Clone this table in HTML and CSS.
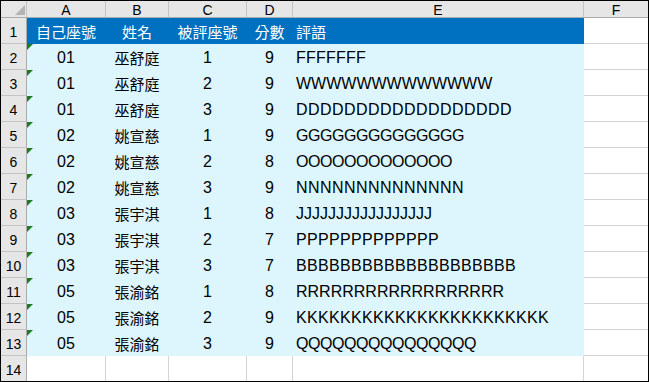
FILE: index.html
```html
<!DOCTYPE html>
<html>
<head>
<meta charset="utf-8">
<link rel="stylesheet" href="styles.css">
</head>
<body>
<div class="sheet">
  <div class="hc corner"><span class="tri"></span></div>
  <div class="hc col">A</div><div class="hc col">B</div><div class="hc col">C</div><div class="hc col">D</div><div class="hc col">E</div><div class="hc col last">F</div>

  <div class="rh">1</div>
  <div class="c head">自己座號</div><div class="c head">姓名</div><div class="c head">被評座號</div><div class="c head">分數</div><div class="c head left">評語</div><div class="c empty last"></div>

  <div class="rh">2</div>
  <div class="c d tx">01</div><div class="c d cjk">巫舒庭</div><div class="c d">1</div><div class="c d">9</div><div class="c d left ls-f">FFFFFFF</div><div class="c empty last"></div>

  <div class="rh">3</div>
  <div class="c d tx">01</div><div class="c d cjk">巫舒庭</div><div class="c d">2</div><div class="c d">9</div><div class="c d left">WWWWWWWWWWWWW</div><div class="c empty last"></div>

  <div class="rh">4</div>
  <div class="c d tx">01</div><div class="c d cjk">巫舒庭</div><div class="c d">3</div><div class="c d">9</div><div class="c d left ls-up">DDDDDDDDDDDDDDDDDD</div><div class="c empty last"></div>

  <div class="rh">5</div>
  <div class="c d tx">02</div><div class="c d cjk">姚宣慈</div><div class="c d">1</div><div class="c d">9</div><div class="c d left ls-down">GGGGGGGGGGGGGG</div><div class="c empty last"></div>

  <div class="rh">6</div>
  <div class="c d tx">02</div><div class="c d cjk">姚宣慈</div><div class="c d">2</div><div class="c d">8</div><div class="c d left ls-down">OOOOOOOOOOOOO</div><div class="c empty last"></div>

  <div class="rh">7</div>
  <div class="c d tx">02</div><div class="c d cjk">姚宣慈</div><div class="c d">3</div><div class="c d">9</div><div class="c d left ls-up">NNNNNNNNNNNNNN</div><div class="c empty last"></div>

  <div class="rh">8</div>
  <div class="c d tx">03</div><div class="c d cjk">張宇淇</div><div class="c d">1</div><div class="c d">8</div><div class="c d left">JJJJJJJJJJJJJJJJJ</div><div class="c empty last"></div>

  <div class="rh">9</div>
  <div class="c d tx">03</div><div class="c d cjk">張宇淇</div><div class="c d">2</div><div class="c d">7</div><div class="c d left ls-k">PPPPPPPPPPPPP</div><div class="c empty last"></div>

  <div class="rh">10</div>
  <div class="c d tx">03</div><div class="c d cjk">張宇淇</div><div class="c d">3</div><div class="c d">7</div><div class="c d left ls-k">BBBBBBBBBBBBBBBBBBBB</div><div class="c empty last"></div>

  <div class="rh">11</div>
  <div class="c d tx">05</div><div class="c d cjk">張渝銘</div><div class="c d">1</div><div class="c d">8</div><div class="c d left">RRRRRRRRRRRRRRRRRR</div><div class="c empty last"></div>

  <div class="rh">12</div>
  <div class="c d tx">05</div><div class="c d cjk">張渝銘</div><div class="c d">2</div><div class="c d">9</div><div class="c d left ls-k">KKKKKKKKKKKKKKKKKKKKKKK</div><div class="c empty last"></div>

  <div class="rh">13</div>
  <div class="c d tx">05</div><div class="c d cjk">張渝銘</div><div class="c d">3</div><div class="c d">9</div><div class="c d left ls-down">QQQQQQQQQQQQQQQ</div><div class="c empty last"></div>

  <div class="rh bottom">14</div>
  <div class="c empty bottom"></div><div class="c empty bottom"></div><div class="c empty bottom"></div><div class="c empty bottom"></div><div class="c empty bottom"></div><div class="c empty bottom last"></div>
</div>
</body>
</html>
```

FILE: styles.css
```css
html, body {
  margin: 0;
  padding: 0;
  background: #ffffff;
}

.sheet {
  width: 649px;
  height: 382px;
  box-sizing: border-box;
  border: 1px solid #000000;
  display: grid;
  grid-template-columns: 26px 79px 63px 78px 46px 291px 64px;
  grid-template-rows: 17px repeat(13, 26px) 25px;
  font-family: "Liberation Sans", "Noto Sans CJK TC", sans-serif;
  color: #000000;
}

.sheet > div {
  box-sizing: border-box;
  border-right: 1px solid #d4d4d4;
  border-bottom: 1px solid #d4d4d4;
  display: flex;
  align-items: center;
  justify-content: center;
  line-height: 1;
  white-space: nowrap;
  overflow: hidden;
}

.sheet > div.last {
  border-right: none;
}

.sheet > div.bottom {
  border-bottom: none;
}

.hc {
  background: #e6e6e6;
  font-size: 14px;
  padding-top: 1px;
}

.sheet > .hc {
  border-right-color: #c4c4c4;
  border-bottom-color: #ababab;
}

.corner {
  justify-content: flex-end !important;
  align-items: flex-end !important;
  padding: 0 1px 2px 0;
}

.tri {
  width: 0;
  height: 0;
  border-left: 10px solid transparent;
  border-bottom: 10px solid #b4b4b4;
}

.sheet > .rh {
  background: #e6e6e6;
  font-size: 14px;
  align-items: flex-end;
  padding-bottom: 4px;
  border-right-color: #ababab;
  border-bottom-color: #c4c4c4;
}

.sheet > .head {
  background: #0070c0;
  border-color: #0070c0;
  color: #ffffff;
  font-family: "Noto Sans CJK TC", sans-serif;
  font-size: 15px;
  padding-top: 1px;
}

.sheet > .d {
  background: #ddf5fd;
  border-color: #ddf5fd;
  font-size: 16px;
  padding-top: 2px;
}

.sheet > .d.cjk {
  font-family: "Noto Sans CJK TC", sans-serif;
  font-size: 15px;
  padding-top: 1px;
}

.sheet > .left {
  justify-content: flex-start;
  padding-left: 3px;
}

.ls-up {
  letter-spacing: 0.45px;
}

.ls-down {
  letter-spacing: -0.45px;
}

.ls-k {
  letter-spacing: 0.33px;
}

.ls-f {
  letter-spacing: 0.22px;
}

.tx {
  position: relative;
}

.tx::before {
  content: "";
  position: absolute;
  left: 0;
  top: 0;
  width: 0;
  height: 0;
  border-top: 6px solid #1e7b1e;
  border-right: 6px solid transparent;
}
```
